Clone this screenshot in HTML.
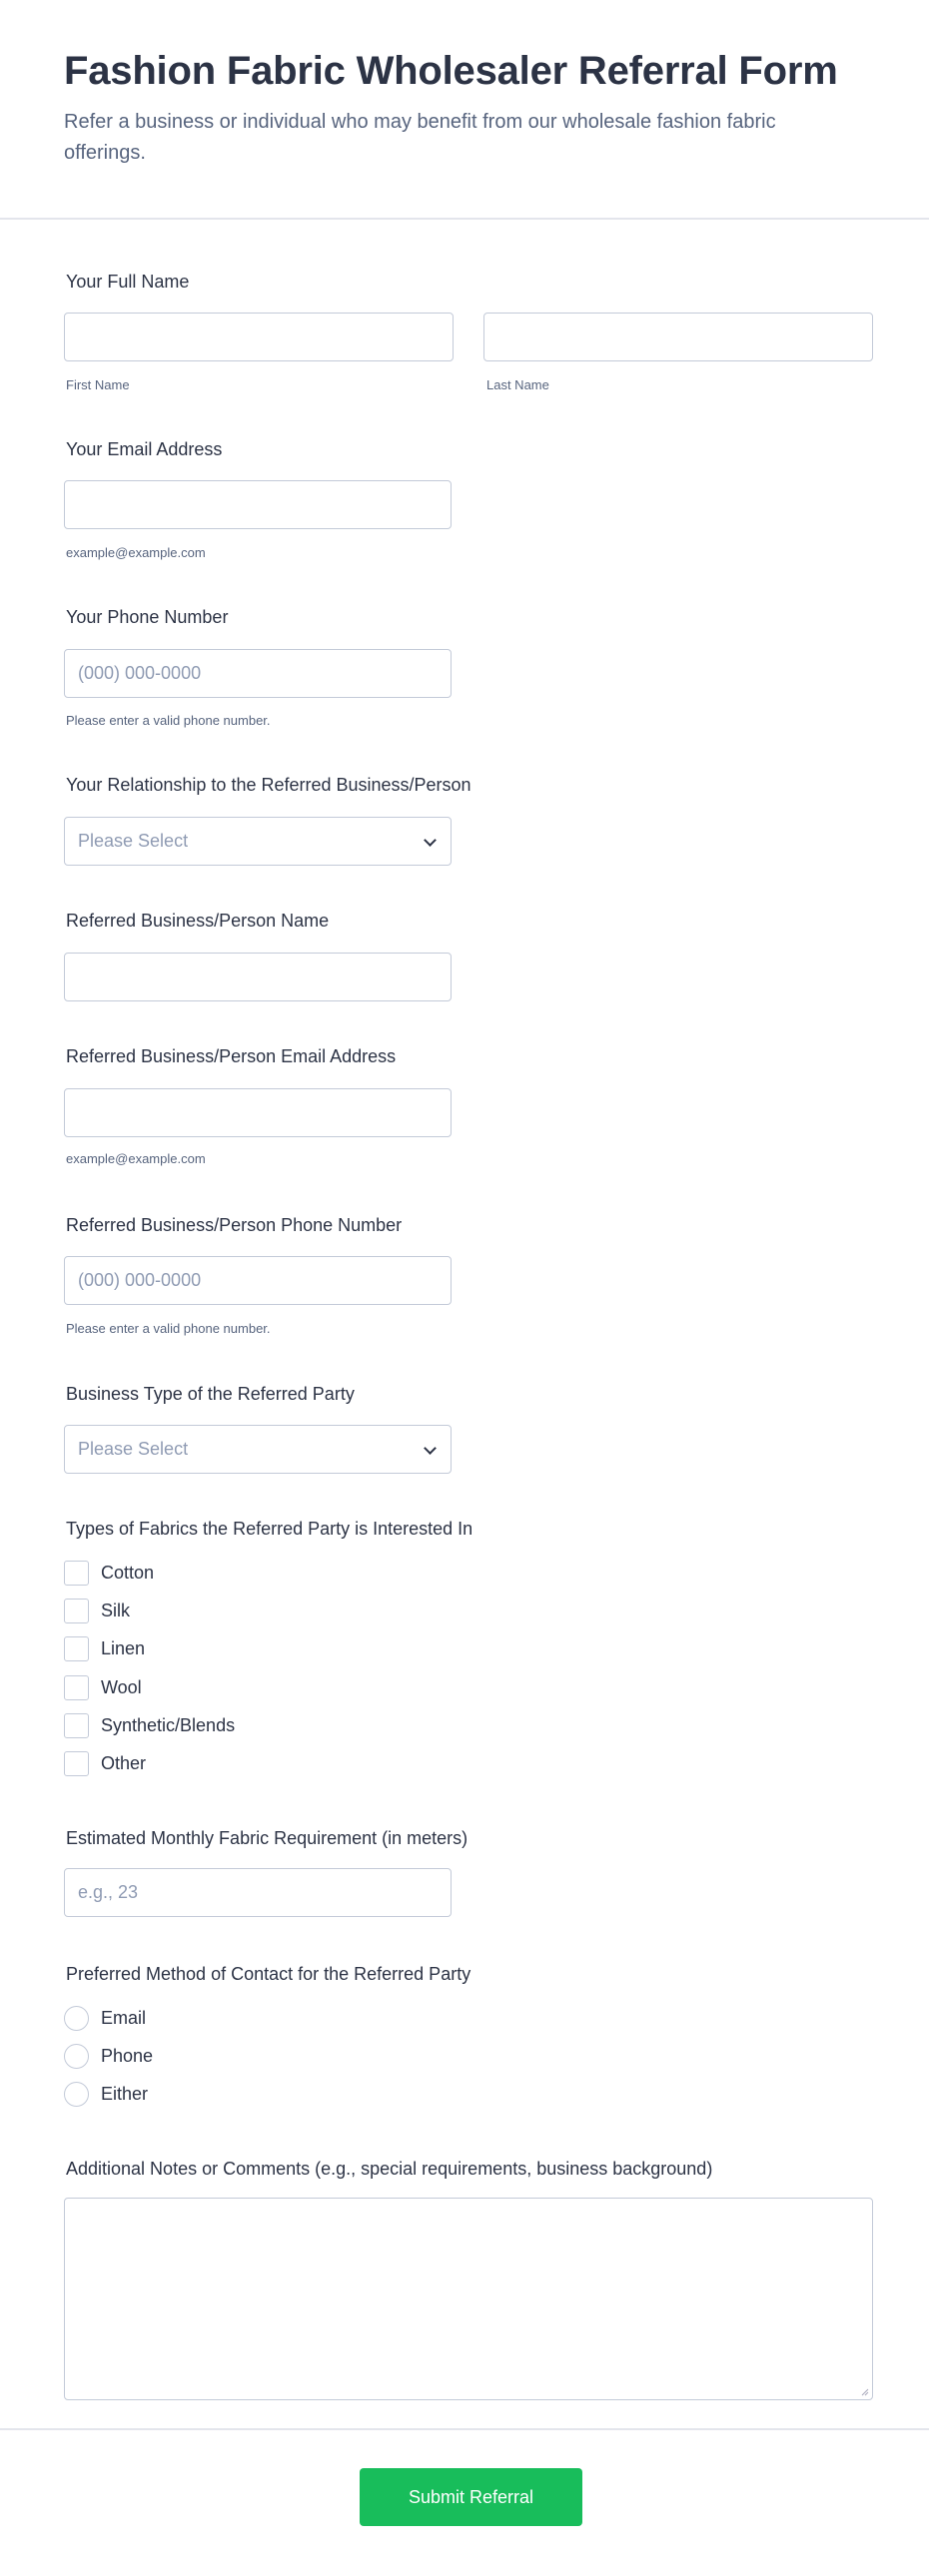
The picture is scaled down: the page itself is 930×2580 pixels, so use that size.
<!DOCTYPE html>
<html><head><meta charset="utf-8"><style>
*{box-sizing:border-box;margin:0;padding:0}
body{width:930px;height:2580px;background:#fff;font-family:"Liberation Sans",Arial,sans-serif;color:#2c3345;position:relative;overflow:hidden}
.a{position:absolute}
h1{position:absolute;left:64px;top:49px;font-size:40px;font-weight:bold;color:#2c3345;letter-spacing:-0.2px}
.sub{position:absolute;left:64px;top:107px;width:800px;font-size:20px;line-height:31px;color:#57647e}
.hr{position:absolute;left:0;width:930px;height:2px;background:#e3e5ec}
.lbl{position:absolute;left:66px;font-size:18px;color:#2c3345}
.inp{position:absolute;left:64px;width:388px;height:49px;border:1px solid #c3cad8;border-radius:4px;background:#fff;font-size:18px;color:#8f9bb3;padding-left:13px;line-height:47px}
.hint{position:absolute;left:66px;font-size:13px;color:#57647e}
.sel::after{content:"";position:absolute;right:16px;top:18px;width:7px;height:7px;border-right:2px solid #2c3345;border-bottom:2px solid #2c3345;transform:rotate(45deg)}
.cb{position:absolute;left:64px;width:25px;height:25px;border:1px solid #c3cad8;border-radius:3px}
.rd{position:absolute;left:64px;width:25px;height:25px;border:1px solid #c3cad8;border-radius:50%}
.opt{position:absolute;left:101px;font-size:18px;color:#2c3345}
</style></head><body>
<h1>Fashion Fabric Wholesaler Referral Form</h1>
<div class="sub">Refer a business or individual who may benefit from our wholesale fashion fabric offerings.</div>
<div class="hr" style="top:218px"></div>

<div class="lbl" style="top:272px">Your Full Name</div>
<div class="inp" style="top:313px;width:390px"></div>
<div class="inp" style="top:313px;left:484px;width:390px"></div>
<div class="hint" style="top:378px">First Name</div>
<div class="hint" style="top:378px;left:487px">Last Name</div>

<div class="lbl" style="top:440px">Your Email Address</div>
<div class="inp" style="top:481px"></div>
<div class="hint" style="top:546px">example@example.com</div>

<div class="lbl" style="top:608px">Your Phone Number</div>
<div class="inp" style="top:650px">(000) 000-0000</div>
<div class="hint" style="top:714px">Please enter a valid phone number.</div>

<div class="lbl" style="top:776px">Your Relationship to the Referred Business/Person</div>
<div class="inp sel" style="top:818px">Please Select</div>

<div class="lbl" style="top:912px">Referred Business/Person Name</div>
<div class="inp" style="top:954px"></div>

<div class="lbl" style="top:1048px">Referred Business/Person Email Address</div>
<div class="inp" style="top:1090px"></div>
<div class="hint" style="top:1153px">example@example.com</div>

<div class="lbl" style="top:1217px">Referred Business/Person Phone Number</div>
<div class="inp" style="top:1258px">(000) 000-0000</div>
<div class="hint" style="top:1323px">Please enter a valid phone number.</div>

<div class="lbl" style="top:1386px">Business Type of the Referred Party</div>
<div class="inp sel" style="top:1427px">Please Select</div>

<div class="lbl" style="top:1521px">Types of Fabrics the Referred Party is Interested In</div>
<div class="cb" style="top:1563px"></div><div class="opt" style="top:1565px">Cotton</div>
<div class="cb" style="top:1601px"></div><div class="opt" style="top:1603px">Silk</div>
<div class="cb" style="top:1639px"></div><div class="opt" style="top:1641px">Linen</div>
<div class="cb" style="top:1678px"></div><div class="opt" style="top:1680px">Wool</div>
<div class="cb" style="top:1716px"></div><div class="opt" style="top:1718px">Synthetic/Blends</div>
<div class="cb" style="top:1754px"></div><div class="opt" style="top:1756px">Other</div>

<div class="lbl" style="top:1831px">Estimated Monthly Fabric Requirement (in meters)</div>
<div class="inp" style="top:1871px">e.g., 23</div>

<div class="lbl" style="top:1967px">Preferred Method of Contact for the Referred Party</div>
<div class="rd" style="top:2009px"></div><div class="opt" style="top:2011px">Email</div>
<div class="rd" style="top:2047px"></div><div class="opt" style="top:2049px">Phone</div>
<div class="rd" style="top:2085px"></div><div class="opt" style="top:2087px">Either</div>

<div class="lbl" style="top:2162px">Additional Notes or Comments (e.g., special requirements, business background)</div>
<div class="inp" style="top:2201px;width:810px;height:203px"></div>
<svg class="a" style="left:862px;top:2392px" width="8" height="8"><path d="M1 7L7 1M4 7L7 4" stroke="#aab" stroke-width="1"/></svg>

<div class="hr" style="top:2432px"></div>
<div class="a" style="left:360px;top:2472px;width:223px;height:58px;background:#18bd5b;border-radius:4px;color:#fff;font-size:18px;text-align:center;line-height:58px">Submit Referral</div>
</body></html>
